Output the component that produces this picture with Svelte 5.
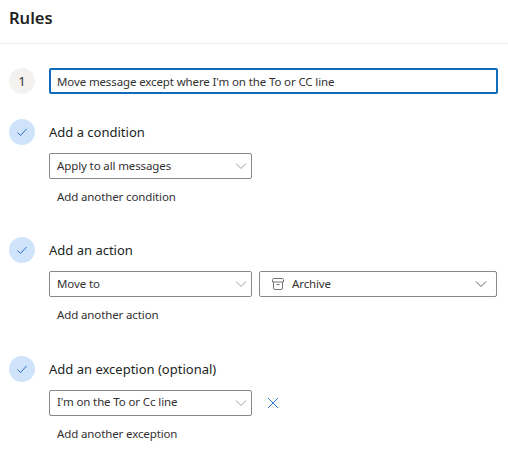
<script>
	const sections = [
		{ title: 'Add a condition', link: 'Add another condition', value: 'Apply to all messages' },
		{ title: 'Add an action', link: 'Add another action', value: 'Move to', folder: 'Archive' },
		{ title: 'Add an exception (optional)', link: 'Add another exception', value: "I'm on the To or Cc line", removable: true }
	];
</script>

{#snippet chevron()}
	<svg class="chevron" width="16" height="16" viewBox="0 0 16 16" fill="none">
		<path d="M3 5.5 8 10.5l5-5" stroke-width="1" />
	</svg>
{/snippet}

<div class="page">
	<h1>Rules</h1>
	<div class="rule">
		<div class="row first">
			<div class="badge">1</div>
			<input class="name" value="Move message except where I'm on the To or CC line" />
		</div>

		{#each sections as section}
			<section>
				<div class="row">
					<div class="badge done">
						<svg width="12" height="12" viewBox="0 0 12 12" fill="none">
							<path d="M1.5 6.5 4.5 9.5 10.5 3" stroke="#2b6fc2" stroke-width="1" />
						</svg>
					</div>
					<h2>{section.title}</h2>
				</div>
				<div class="controls">
					<div class="select">
						<span>{section.value}</span>
						{@render chevron()}
					</div>
					{#if section.folder}
						<div class="select wide">
							<svg class="archive" width="14" height="14" viewBox="0 0 14 14" fill="none">
								<path d="M1.5 2.5a1 1 0 0 1 1-1h9a1 1 0 0 1 1 1v2.5h-11zM2.5 5v6a1.5 1.5 0 0 0 1.5 1.5h6a1.5 1.5 0 0 0 1.5-1.5V5M5.5 7.5h3" stroke="#7a7674" stroke-width="1" />
							</svg>
							<span>{section.folder}</span>
							{@render chevron()}
						</div>
					{/if}
					{#if section.removable}
						<svg class="remove" width="12" height="12" viewBox="0 0 12 12" fill="none">
							<path d="M1 1l10 10M11 1 1 11" stroke="#2f78d2" stroke-width="1" />
						</svg>
					{/if}
				</div>
				<div class="link">{section.link}</div>
			</section>
		{/each}
	</div>
</div>

<style>
	:global(body) {
		margin: 0;
		background: #fff;
	}

	.page {
		width: 508px;
		height: 454px;
		overflow: hidden;
		font-family: 'Noto Sans', 'Open Sans', sans-serif;
		color: #323130;
		font-size: 11.5px;
		letter-spacing: -0.12px;
	}

	h1 {
		margin: 0;
		height: 44px;
		box-sizing: border-box;
		padding: 6px 0 0 9px;
		font-size: 16.5px;
		line-height: 24px;
		font-weight: 600;
		letter-spacing: 0;
		color: #201f1e;
		border-bottom: 1px solid #f0eeec;
	}

	.rule {
		padding: 24px 10px 0 9px;
	}

	.row {
		display: flex;
		align-items: center;
		gap: 14px;
	}

	.first {
		margin-bottom: 25px;
	}

	.badge {
		flex: none;
		width: 26px;
		height: 26px;
		border-radius: 50%;
		background: #f3f2f1;
		display: flex;
		align-items: center;
		justify-content: center;
		font-size: 13px;
	}

	.done {
		background: #cfe4fa;
	}

	.name {
		flex: 1;
		min-width: 0;
		height: 26px;
		box-sizing: border-box;
		padding: 0 6px;
		border: 2px solid #0f6cbd;
		border-radius: 2px;
		font: inherit;
		letter-spacing: inherit;
		color: inherit;
		outline: none;
	}

	h2 {
		margin: 0;
		font-size: 13px;
		font-weight: 400;
		letter-spacing: 0;
		color: #201f1e;
	}

	section + section {
		margin-top: 31.4px;
	}

	.controls {
		display: flex;
		align-items: center;
		gap: 7px;
		margin: 8px 0 0 40px;
	}

	.select {
		width: 203px;
		height: 26px;
		box-sizing: border-box;
		display: flex;
		align-items: center;
		padding: 0 7px;
		border: 1px solid #8a8886;
		border-radius: 2px;
	}

	.select span {
		flex: 1;
		padding-bottom: 2px;
	}

	.wide {
		width: 238px;
		padding-left: 11px;
	}

	.archive {
		margin-right: 7px;
	}

	.chevron {
		flex: none;
		margin-right: -5px;
		stroke: #a19f9d;
	}

	.wide .chevron {
		margin-right: 0;
		stroke: #605e5c;
	}

	.remove {
		margin-left: 8px;
	}

	.link {
		margin: 9px 0 0 48px;
		line-height: 18px;
	}
</style>
